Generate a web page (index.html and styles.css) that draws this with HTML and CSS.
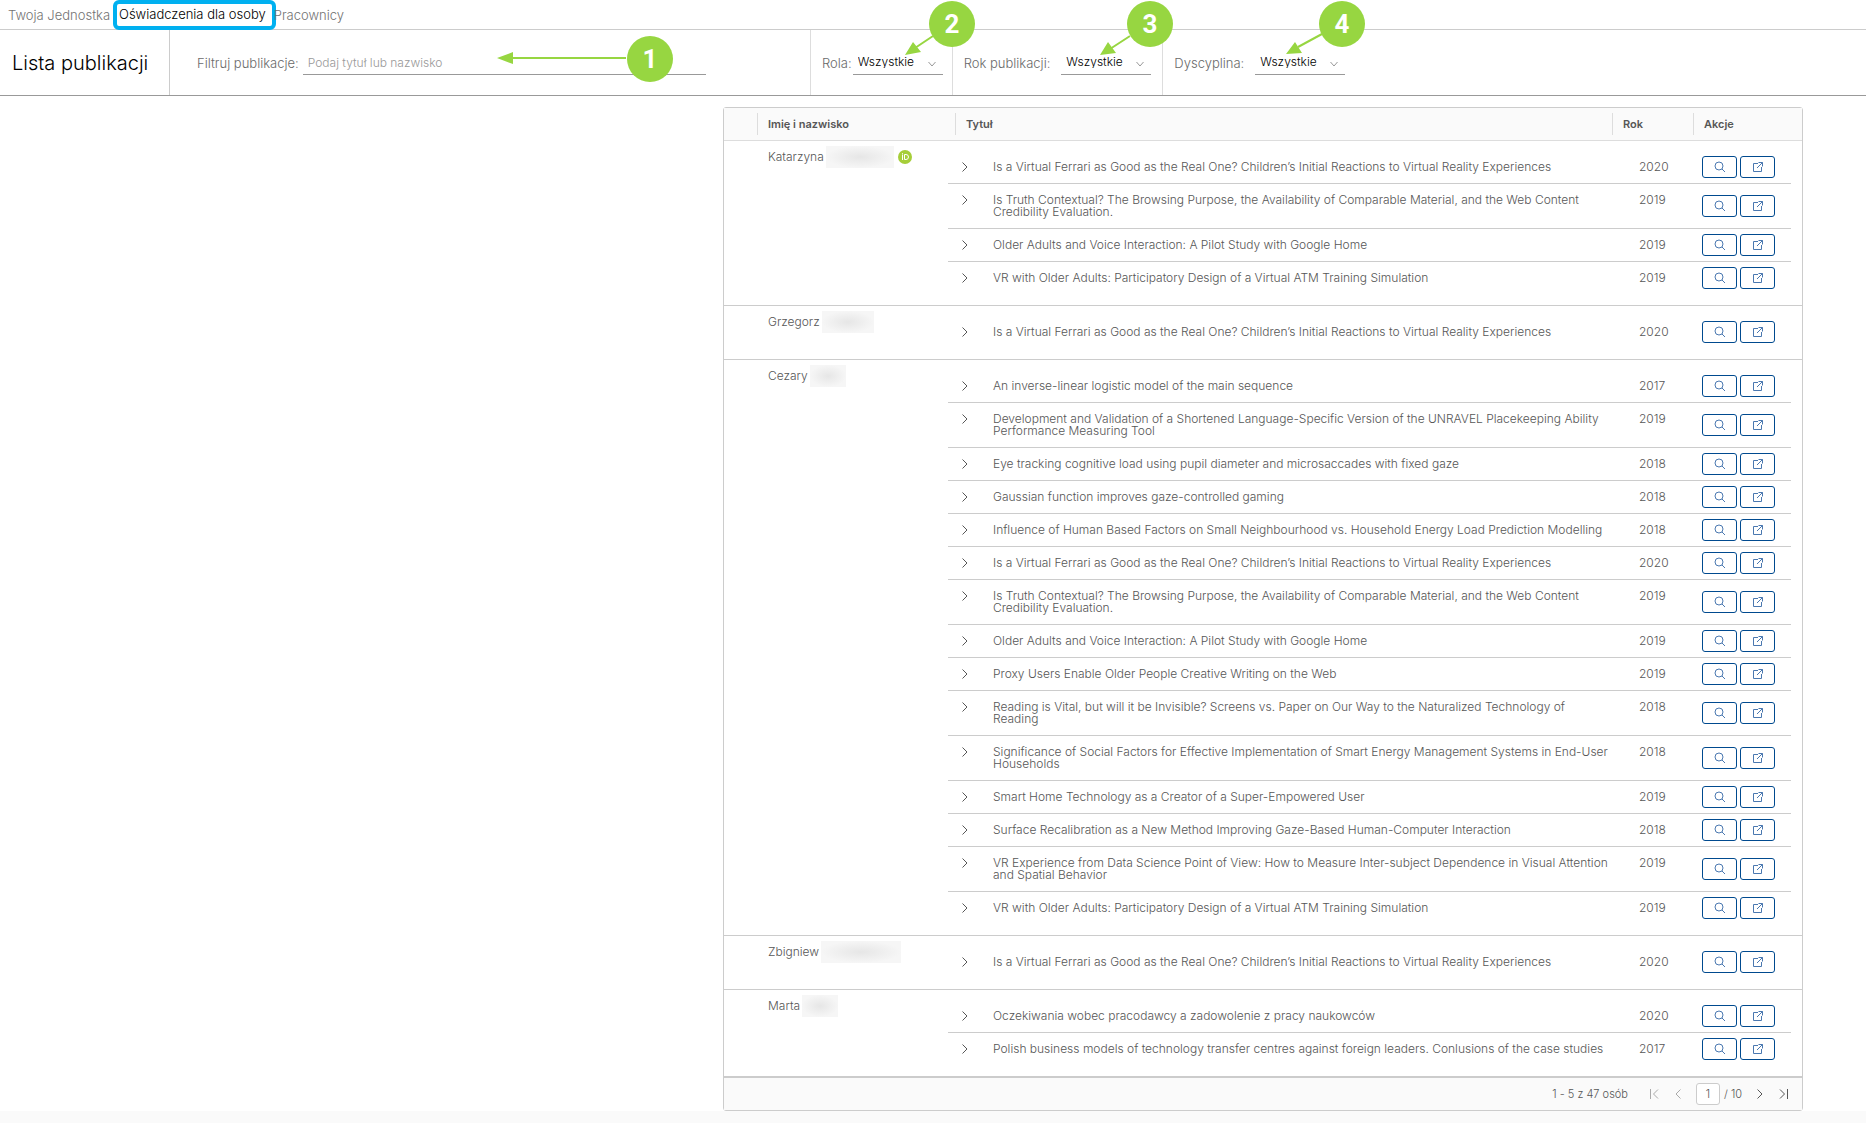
FILE: index.html
```html
<!DOCTYPE html>
<html lang="pl">
<head>
    <meta charset="UTF-8">
    <meta name="viewport" content="width=device-width, initial-scale=1.0">
    <title>Lista publikacji</title>
    <link rel="stylesheet" href="styles.css">
</head>
<body>
    <svg class="sprite" aria-hidden="true">
        <symbol id="i-search" viewBox="0 0 12 12"><circle cx="5" cy="5" r="4" /><path d="M8 8l3 3" /></symbol>
        <symbol id="i-open" viewBox="0 0 12 12"><path d="M6 2.500H1.500v8h8V6M6.500 1.500h4v4M10.500 1.500L5 7" /></symbol>
        <symbol id="i-right" viewBox="0 0 12 12"><path d="M3.500 1.500L8 6l-4.500 4.500" /></symbol>
        <symbol id="i-left" viewBox="0 0 12 12"><path d="M8.500 1.500L4 6l4.500 4.500" /></symbol>
        <symbol id="i-last" viewBox="0 0 12 12"><path d="M2 1.500L6.500 6 2 10.500M9.500 1v10" /></symbol>
        <symbol id="i-first" viewBox="0 0 12 12"><path d="M10 1.500L5.500 6l4.500 4.500M2.500 1v10" /></symbol>
        <symbol id="i-down" viewBox="0 0 12 12"><path d="M2.500 4L6 8l3.500-4" /></symbol>
    </svg>

    <div class="page">
        <nav class="tabs">
            <a href="#">Twoja Jednostka</a>
            <a href="#" class="active">Oświadczenia dla osoby</a>
            <a href="#">Pracownicy</a>
        </nav>

        <header class="toolbar">
            <h1>Lista publikacji</h1>
            <div class="filter search">
                <label for="query">Filtruj publikacje:</label>
                <input type="text" id="query" placeholder="Podaj tytuł lub nazwisko">
            </div>
            <div class="filter role">
                <label for="role">Rola:</label>
                <span class="select">
                    <select id="role"><option>Wszystkie</option></select>
                    <svg class="icon"><use href="#i-down" /></svg>
                </span>
            </div>
            <div class="filter">
                <label for="year">Rok publikacji:</label>
                <span class="select">
                    <select id="year"><option>Wszystkie</option></select>
                    <svg class="icon"><use href="#i-down" /></svg>
                </span>
            </div>
            <div class="filter">
                <label for="discipline">Dyscyplina:</label>
                <span class="select">
                    <select id="discipline"><option>Wszystkie</option></select>
                    <svg class="icon"><use href="#i-down" /></svg>
                </span>
            </div>
        </header>

        <!-- numbered hints over the toolbar -->
        <svg class="hints" width="1400" height="96">
            <path class="line" d="M626 58H512M933 36L915 48M1130 36L1110 49M1322 34L1298 47" />
            <path class="head" d="M497 58l16-6v12zM905 55l8-13 8 10zM1100 55l8-13 8 11zM1286 54l9-12 7 11z" />
            <circle cx="650" cy="59" r="23" />
            <circle cx="952" cy="24" r="23" />
            <circle cx="1150" cy="24" r="23" />
            <circle cx="1342" cy="24" r="23" />
            <text x="650" y="68">1</text>
            <text x="952" y="33">2</text>
            <text x="1150" y="33">3</text>
            <text x="1342" y="33">4</text>
        </svg>

        <main>
            <div class="datagrid">
                <table class="people">
                    <colgroup>
                        <col class="c-mark"><col class="c-name"><col><col class="c-year"><col class="c-actions">
                    </colgroup>
                    <thead>
                        <tr>
                            <td></td>
                            <th><span>Imię i nazwisko</span></th>
                            <th class="title"><span>Tytuł</span></th>
                            <th><span>Rok</span></th>
                            <th><span>Akcje</span></th>
                        </tr>
                    </thead>
                    <tbody id="rows"></tbody>
                </table>
                <footer>
                    <span class="count">1 - 5 z 47 osób</span>
                    <button type="button" disabled aria-label="Pierwsza"><svg class="icon"><use href="#i-first" /></svg></button>
                    <button type="button" disabled aria-label="Poprzednia"><svg class="icon"><use href="#i-left" /></svg></button>
                    <input type="text" value="1" aria-label="Strona">
                    <span class="pages">/ 10</span>
                    <button type="button" aria-label="Następna"><svg class="icon"><use href="#i-right" /></svg></button>
                    <button type="button" aria-label="Ostatnia"><svg class="icon"><use href="#i-last" /></svg></button>
                </footer>
            </div>
        </main>
    </div>

    <script>
        const ferrari = ["Is a Virtual Ferrari as Good as the Real One? Children’s Initial Reactions to Virtual Reality Experiences", 2020];
        const truth = ["Is Truth Contextual? The Browsing Purpose, the Availability of Comparable Material, and the Web Content Credibility Evaluation.", 2019];
        const voice = ["Older Adults and Voice Interaction: A Pilot Study with Google Home", 2019];
        const atm = ["VR with Older Adults: Participatory Design of a Virtual ATM Training Simulation", 2019];

        // hidden = width of the masked surname
        const people = [
            { name: "Katarzyna", hidden: 68, orcid: true, items: [ferrari, truth, voice, atm] },
            { name: "Grzegorz", hidden: 52, items: [ferrari] },
            { name: "Cezary", hidden: 36, items: [
                ["An inverse-linear logistic model of the main sequence", 2017],
                ["Development and Validation of a Shortened Language-Specific Version of the UNRAVEL Placekeeping Ability Performance Measuring Tool", 2019],
                ["Eye tracking cognitive load using pupil diameter and microsaccades with fixed gaze", 2018],
                ["Gaussian function improves gaze-controlled gaming", 2018],
                ["Influence of Human Based Factors on Small Neighbourhood vs. Household Energy Load Prediction Modelling", 2018],
                ferrari,
                truth,
                voice,
                ["Proxy Users Enable Older People Creative Writing on the Web", 2019],
                ["Reading is Vital, but will it be Invisible? Screens vs. Paper on Our Way to the Naturalized Technology of Reading", 2018],
                ["Significance of Social Factors for Effective Implementation of Smart Energy Management Systems in End-User Households", 2018],
                ["Smart Home Technology as a Creator of a Super-Empowered User", 2019],
                ["Surface Recalibration as a New Method Improving Gaze-Based Human-Computer Interaction", 2018],
                ["VR Experience from Data Science Point of View: How to Measure Inter-subject Dependence in Visual Attention and Spatial Behavior", 2019],
                atm
            ] },
            { name: "Zbigniew", hidden: 80, items: [ferrari] },
            { name: "Marta", hidden: 36, items: [
                ["Oczekiwania wobec pracodawcy a zadowolenie z pracy naukowców", 2020],
                ["Polish business models of technology transfer centres against foreign leaders. Conlusions of the case studies", 2017]
            ] }
        ];

        const icon = id => `<svg class="icon"><use href="#i-${id}" /></svg>`;
        const orcid = `<svg class="orcid" viewBox="0 0 14 14"><circle cx="7" cy="7" r="7" /><path d="M4.500 4.500v5.500M4.500 3v.8M6.500 4.500v5h1.500a2.500 2.500 0 0 0 0-5z" /></svg>`;

        function itemRow([title, year]) {
            return `<tr>
                <td class="expand"><button type="button" aria-label="Rozwiń">${icon("right")}</button></td>
                <td class="text">${title}</td>
                <td class="year">${year}</td>
                <td class="actions"><div>
                    <button type="button" aria-label="Podgląd">${icon("search")}</button>
                    <button type="button" aria-label="Otwórz">${icon("open")}</button>
                </div></td>
            </tr>`;
        }

        document.getElementById("rows").innerHTML = people.map(p => `<tr>
            <td></td>
            <td class="name"><div>${p.name}<span class="masked" style="width: ${p.hidden}px"></span>${p.orcid ? orcid : ""}</div></td>
            <td colspan="3" class="list"><table class="items">${p.items.map(itemRow).join("")}</table></td>
        </tr>`).join("");
    </script>
</body>
</html>
```

FILE: styles.css
```css
* {
    box-sizing: border-box;
}
body {
    margin: 0;
    background: #fafafa;
    color: #565656;
    font-family: Inter, "Open Sans", sans-serif;
    font-size: 12px;
    font-weight: 300;
    line-height: 12px;
}
button, input, select {
    font: inherit;
    color: inherit;
}
.sprite {
    display: none;
}
.icon {
    display: block;
    width: 12px;
    height: 12px;
    fill: none;
    stroke: currentColor;
}
.page {
    position: relative;
    background: #fff;
}

/* tabs */
.tabs {
    display: flex;
    align-items: center;
    gap: 3px;
    height: 30px;
    padding-left: 8px;
    border-bottom: 1px solid #ccc;
    font-size: 13px;
}
.tabs a {
    color: #737373;
    text-decoration: none;
}
.tabs .active {
    display: flex;
    align-items: center;
    height: 30px;
    margin-right: -5px;
    padding: 0 6px 2px 2px;
    border: 4px solid #00b0f0;
    border-radius: 6px;
    color: #000;
}

/* toolbar */
.toolbar {
    display: flex;
    height: 66px;
    border-bottom: 1px solid #999;
    font-size: 12px;
}
h1 {
    display: flex;
    align-items: center;
    width: 170px;
    margin: 0;
    padding-left: 12px;
    border-right: 1px solid #ccc;
    color: #000;
    font-size: 20px;
    font-weight: 300;
    white-space: nowrap;
}
.filter {
    display: flex;
    align-items: center;
    gap: 11px;
    padding: 0 11px;
    color: #6a6a6a;
}
.filter + .filter {
    border-left: 1px solid #ddd;
}
.filter label {
    font-size: 13px;
    white-space: nowrap;
}
.search {
    flex: 0 1 640px;
    gap: 4px;
    padding: 0 104px 0 27px;
}
.role {
    gap: 1px;
    padding-right: 9px;
}
.search input {
    flex: 1;
    min-width: 0;
    height: 24px;
    padding: 0 5px;
    border: 0;
    border-bottom: 1px solid #999;
    background: none;
}
.search input::placeholder {
    color: #999;
}
.select {
    position: relative;
}
.select select {
    appearance: none;
    width: 90px;
    height: 24px;
    padding: 0 5px;
    border: 0;
    border-bottom: 1px solid #999;
    border-radius: 0;
    background: none;
    color: #000;
}
.select .icon {
    position: absolute;
    top: 7px;
    right: 5px;
    color: #999;
    pointer-events: none;
}

/* hints */
.hints {
    position: absolute;
    top: 0;
    left: 0;
    pointer-events: none;
}
.hints circle, .hints .head {
    fill: #97d641;
}
.hints .line {
    stroke: #97d641;
    stroke-width: 2;
}
.hints text {
    fill: #fff;
    font: 700 26px Roboto, sans-serif;
    text-anchor: middle;
}

/* datagrid */
main {
    display: flex;
    justify-content: flex-end;
    padding: 11px 63px 0 0;
}
.datagrid {
    width: 1080px;
    border: 1px solid #ccc;
    border-radius: 3px;
}
table {
    width: 100%;
    border-collapse: collapse;
    table-layout: fixed;
}
td, th {
    padding: 0;
    text-align: left;
    vertical-align: top;
}
.c-mark {
    width: 33px;
}
.c-name {
    width: 191px;
}
.c-year {
    width: 81px;
}
.c-actions {
    width: 109px;
}
thead tr {
    height: 32px;
    background: #fafafa;
    border-bottom: 1px solid #ddd;
}
thead th {
    vertical-align: middle;
    font-size: 11px;
    font-weight: 600;
}
thead th span {
    display: block;
    padding-left: 10px;
    border-left: 1px solid #ddd;
    line-height: 22px;
}
thead .title {
    padding-left: 7px;
}
#rows > tr + tr {
    border-top: 1px solid #ccc;
}
.name div {
    display: flex;
    align-items: center;
    height: 22px;
    margin-top: 5px;
    padding-left: 11px;
}
.masked {
    height: 22px;
    margin: 0 4px 0 2px;
    background: radial-gradient(closest-side, #e6e6e6, #f6f6f6);
}
.orcid {
    width: 14px;
    height: 14px;
    fill: #a6ce39;
}
.orcid path {
    fill: none;
    stroke: #fff;
}
.list {
    padding: 10px 11px 11px 0;
}
.items tr + tr {
    border-top: 1px solid #ccc;
}
.items td {
    padding: 10px 0;
}
.items .expand {
    width: 45px;
}
.items .text {
    padding-right: 5px;
}
.expand button, footer button {
    display: block;
    padding: 0;
    border: 0;
    background: none;
    cursor: pointer;
}
.expand button {
    margin-left: 11px;
}
.items .year {
    width: 86px;
    padding-left: 23px;
}
.items .actions {
    width: 89px;
    padding: 0;
    vertical-align: middle;
}
.actions div {
    display: flex;
    gap: 3px;
}
.actions button {
    display: flex;
    align-items: center;
    justify-content: center;
    width: 35px;
    height: 22px;
    padding: 0;
    border: 1px solid #004a8f;
    border-radius: 3px;
    background: #fff;
    color: #4a78b0;
    cursor: pointer;
}

/* pagination */
footer {
    display: flex;
    align-items: center;
    justify-content: flex-end;
    gap: 12px;
    height: 34px;
    padding-right: 12px;
    border-top: 2px solid #ccc;
    background: #fafafa;
    font-size: 11px;
}
footer .count {
    margin-right: 8px;
}
footer button:disabled {
    color: #aaa;
}
footer input {
    width: 24px;
    height: 22px;
    padding: 0;
    border: 1px solid #ccc;
    border-radius: 3px;
    background: #fff;
    text-align: center;
}
footer .pages {
    margin-left: -8px;
}
```
